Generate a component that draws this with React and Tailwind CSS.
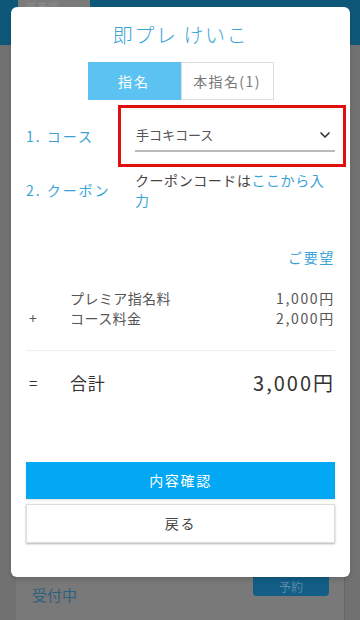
import { ChevronDown } from 'lucide-react';

const jp = { fontFamily: '"Noto Sans CJK JP", "Noto Sans", sans-serif' };

function Background() {
  return (
    <div className="flex h-full flex-col">
      <div className="flex h-[45px] bg-[#0f5779] pl-[18px]">
        <div className="h-[15px] w-[72px] bg-[#7b7b7b] px-2 text-[11px] leading-[15px] text-[#8d8d8d]">新着順</div>
      </div>
      <div className="flex flex-1 bg-[#717171] pl-[16px] pr-[15px]">
        <div className="flex flex-1 flex-col justify-end border-r border-[#666] bg-[#797979] pb-[14px]">
          <div className="flex items-start justify-between pl-[16px] pr-[15px]">
            <span className="mt-[8px] text-[15px] text-[#2e5f80]">受付中</span>
            <div className="mb-[10px] flex h-[20px] w-[76px] items-end justify-center rounded-b-sm bg-[#125e87] text-[12px] text-[#5c8aa6]">
              予約
            </div>
          </div>
        </div>
      </div>
    </div>
  );
}

function PriceRow({ sign, label, price }) {
  return (
    <div className="flex h-[20px] items-center text-[14px] text-[#555]">
      <span className="w-[44px] pl-[3px]">{sign}</span>
      <span className="flex-1 tracking-[0.03em]">{label}</span>
      <span className="tracking-[0.12em]">{price}</span>
    </div>
  );
}

export default function App() {
  return (
    <div className="relative h-[620px] w-[360px] overflow-hidden" style={jp}>
      <Background />
      <div className="absolute left-[11px] top-[7px] flex h-[570px] w-[339px] flex-col rounded-md bg-white px-[15px] shadow-md">
        <h1 className="mt-[15px] text-center text-[20px] font-light leading-[26px] tracking-[0.08em] text-[#3aa3d6]">即プレ けいこ</h1>

        <div className="mt-[14px] flex justify-center">
          <div className="flex h-[38px] w-[186px]">
            <div className="flex w-[93px] items-center justify-center bg-[#5cc2f1] text-[14px] tracking-[0.15em] text-white">指名</div>
            <div className="flex flex-1 items-center justify-center border border-[#ddd] text-[14px] tracking-[0.1em] text-[#777]">本指名(1)</div>
          </div>
        </div>

        <div className="mt-[21px] flex h-[30px] items-center">
          <span className="w-[109px] text-[14px] tracking-[0.14em] text-[#3aa3d6]">1.&nbsp;コース</span>
          <div className="flex h-[31px] flex-1 items-center justify-between border-b-2 border-[#bbb] pl-[1px] pr-[2px]">
            <span className="text-[13px] text-[#555]">手コキコース</span>
            <ChevronDown className="h-[16px] w-[16px] text-[#333]" strokeWidth={2.5} />
          </div>
        </div>

        <div className="mt-[19px] flex items-center">
          <span className="w-[109px] text-[14px] tracking-[0.14em] text-[#3aa3d6]">2.&nbsp;クーポン</span>
          <p className="w-[200px] text-[14px] leading-[20px] tracking-[0.04em] text-[#444]">
            クーポンコードは<span className="text-[#3aa3d6]">ここから入力</span>
          </p>
        </div>

        <div className="mt-[37px] text-right text-[14px] tracking-[0.12em] text-[#3aa3d6]">ご要望</div>

        <div className="mt-[20px]">
          <PriceRow sign="" label="プレミア指名料" price="1,000円" />
          <PriceRow sign="+" label="コース料金" price="2,000円" />
        </div>

        <div className="mt-[22px] border-t border-[#eee]" />

        <div className="mt-[17px] flex items-center text-[#333]">
          <span className="w-[44px] pl-[3px] text-[15px]">=</span>
          <span className="flex-1 text-[17px] tracking-[0.05em]">合計</span>
          <span className="text-[20px] tracking-[0.1em]">3,000円</span>
        </div>

        <button className="mt-[64px] h-[37px] w-full bg-[#02a8f3] text-[14px] tracking-[0.12em] text-white shadow-sm">内容確認</button>
        <button className="mt-[5px] h-[39px] w-full border border-[#ddd] bg-white text-[14px] tracking-[0.12em] text-[#444] shadow-[0_1px_2px_rgba(0,0,0,0.3)]">戻る</button>

        <div className="absolute left-[107px] top-[98px] h-[62px] w-[228px] border-[3px] border-[#e01010]" />
      </div>
    </div>
  );
}
